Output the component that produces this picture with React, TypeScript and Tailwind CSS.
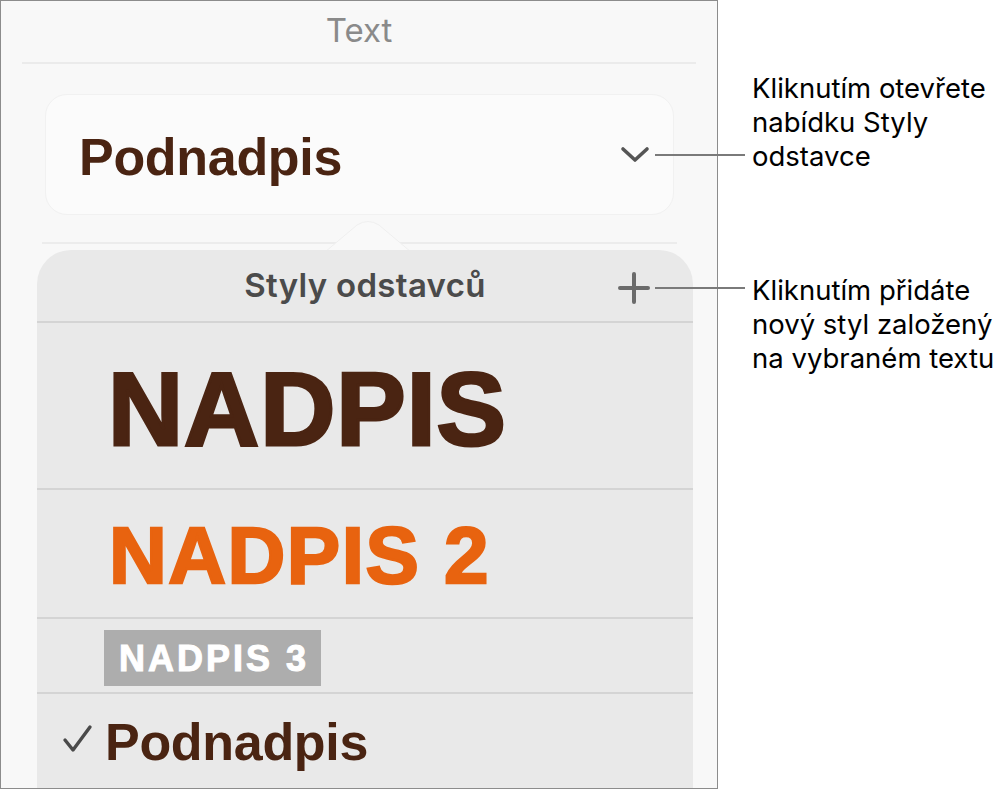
import React from "react";

const sans = { fontFamily: '"Liberation Sans", Arial, sans-serif' };
const ui = { fontFamily: 'Inter, "Noto Sans", sans-serif' };

const Divider = () => <div className="h-[2px] bg-[#d4d4d4]" />;

const App = () => {
  return (
    <div className="relative flex w-[1003px] h-[790px] bg-white overflow-hidden">
      {/* panel */}
      <div className="flex flex-col w-[718px] h-[789px] border border-[#8c8c8c] bg-[#f8f8f8] overflow-hidden">
        <div className="h-[63px] mx-[21px] border-b-2 border-[#ebebeb] flex items-center justify-center">
          <span className="text-[33px] text-[#8a8a8a] mt-[-2px]" style={ui}>
            Text
          </span>
        </div>

        <div className="mt-[30px] ml-[44px] w-[629px] h-[121px] rounded-[22px] border border-[#f1f1f1] bg-[#fbfbfb] flex items-center justify-between pl-[33px] pr-[23px]">
          <span className="text-[52px] font-bold text-[#4a2412] tracking-[-0.3px] leading-none mt-[4px]" style={sans}>
            Podnadpis
          </span>
          <svg width="30" height="18" viewBox="0 0 30 18">
            <path d="M3 3 L15 14 L27 3" fill="none" stroke="#555" strokeWidth="3.6" strokeLinecap="round" strokeLinejoin="round" />
          </svg>
        </div>

        <div className="relative mt-[27px] ml-[41px] w-[635px] h-[2px] bg-[#ececec]">
          <svg className="absolute left-[283px] top-[-21px]" width="86" height="32" viewBox="0 0 86 32">
            <path d="M0 31 L32 4 Q43 -3 54 4 L86 31 Z" fill="#f9f9f9" stroke="#efefef" strokeWidth="1" />
          </svg>
        </div>

        <div className="relative mt-[6px] ml-[36px] w-[656px] flex-1 rounded-t-[34px] bg-[#e9e9e9] flex flex-col">
          <div className="relative h-[71px] flex items-center justify-center">
            <span className="text-[33px] font-semibold text-[#4b4b4b] tracking-[0.3px] mt-[1px]" style={ui}>
              Styly odstavců
            </span>
            <svg className="absolute right-[42px] top-[21px]" width="34" height="34" viewBox="0 0 34 34">
              <path d="M17 3 V31 M3 17 H31" fill="none" stroke="#6b6b6b" strokeWidth="4" strokeLinecap="round" />
            </svg>
          </div>
          <Divider />
          <div className="h-[165px] flex items-center pl-[71px]">
            <span
              className="text-[104px] font-bold text-[#4a2412] leading-none tracking-[1px] mt-[6px] [-webkit-text-stroke:3px_#4a2412]"
              style={sans}
            >
              NADPIS
            </span>
          </div>
          <Divider />
          <div className="h-[127px] flex items-center pl-[72px]">
            <span
              className="text-[80px] font-bold text-[#e8630f] leading-none tracking-[1.5px] mt-[4px] [-webkit-text-stroke:2.4px_#e8630f]"
              style={sans}
            >
              NADPIS 2
            </span>
          </div>
          <Divider />
          <div className="h-[73px] flex items-center pl-[67px]">
            <span
              className="bg-[#adadad] text-white text-[36px] font-bold leading-none tracking-[3px] pl-[15px] pr-[12px] pt-[11px] pb-[9px] mt-[4px] [-webkit-text-stroke:1px_#ffffff]"
              style={sans}
            >
              NADPIS 3
            </span>
          </div>
          <Divider />
          <div className="flex items-center pl-[25px] h-[92px]">
            <svg width="32" height="30" viewBox="0 0 32 30" className="mr-[11px] mt-[-2px]">
              <path d="M3 16 L11 26 L28 3" fill="none" stroke="#4a4a4a" strokeWidth="3.4" strokeLinecap="round" strokeLinejoin="round" />
            </svg>
            <span className="text-[52px] font-bold text-[#4a2412] tracking-[-0.3px] leading-none mt-[4px]" style={sans}>
              Podnadpis
            </span>
          </div>
        </div>
      </div>

      {/* callouts */}
      <div className="flex-1 flex flex-col pl-[34px] text-[27.5px] leading-[34px] text-black" style={ui}>
        <p className="mt-[71px]">
          Kliknutím otevřete
          <br />
          nabídku Styly
          <br />
          odstavce
        </p>
        <p className="mt-[100px]">
          Kliknutím přidáte
          <br />
          nový styl založený
          <br />
          na vybraném textu
        </p>
      </div>

      <div className="absolute left-[655px] top-[154px] w-[90px] h-[2px] bg-[#7a7a7a]" />
      <div className="absolute left-[655px] top-[287px] w-[90px] h-[2px] bg-[#7a7a7a]" />
    </div>
  );
};

export default App;
